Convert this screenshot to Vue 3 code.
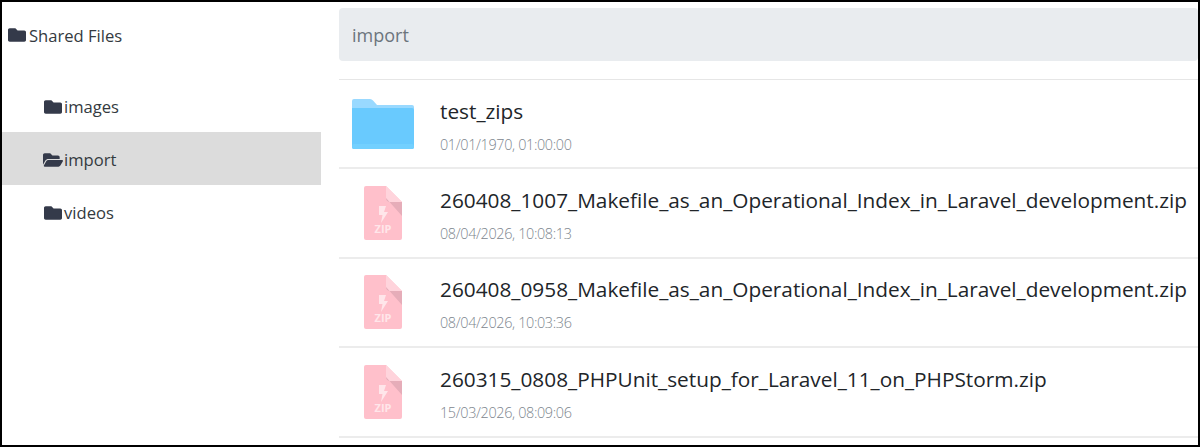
<script setup>
const subs = [
  { name: 'images', open: false },
  { name: 'import', open: true },
  { name: 'videos', open: false },
]
const files = [
  { name: '260408_1007_Makefile_as_an_Operational_Index_in_Laravel_development.zip', date: '08/04/2026, 10:08:13' },
  { name: '260408_0958_Makefile_as_an_Operational_Index_in_Laravel_development.zip', date: '08/04/2026, 10:03:36' },
  { name: '260315_0808_PHPUnit_setup_for_Laravel_11_on_PHPStorm.zip', date: '15/03/2026, 08:09:06' },
]
</script>

<template>
  <div class="frame">
    <aside class="side">
      <div class="root">
        <svg class="ico" viewBox="0 0 512 512"><path d="M464 128H272l-54.6-54.6c-6-6-14.1-9.4-22.6-9.4H48C21.5 64 0 85.500 0 112v288c0 26.500 21.500 48 48 48h416c26.500 0 48-21.500 48-48V176c0-26.500-21.500-48-48-48z"/></svg>
        <span>Shared Files</span>
      </div>
      <ul class="tree">
        <li v-for="s in subs" :key="s.name" class="node" :class="{ active: s.open }">
          <svg v-if="s.open" class="ico open" viewBox="0 0 576 512"><path d="M572.700 292.100l-72.400 124.100A64 64 0 0 1 445 448H45c-18.500 0-30.100-20.100-20.700-36.100l72.400-124.100A64 64 0 0 1 152 256h400c18.500 0 30.100 20.100 20.700 36.100zM152 224h328v-48c0-26.500-21.500-48-48-48H272l-64-64H48C21.500 64 0 85.500 0 112v278l69.100-118.400C86.200 242.300 118 224 152 224z"/></svg>
          <svg v-else class="ico" viewBox="0 0 512 512"><path d="M464 128H272l-54.6-54.6c-6-6-14.1-9.4-22.6-9.4H48C21.5 64 0 85.500 0 112v288c0 26.500 21.500 48 48 48h416c26.500 0 48-21.500 48-48V176c0-26.500-21.500-48-48-48z"/></svg>
          <span>{{ s.name }}</span>
        </li>
      </ul>
    </aside>
    <main class="main">
      <div class="path">import</div>
      <div class="list">
        <div class="row">
          <div class="thumb">
            <svg width="62" height="50" viewBox="0 0 62 50">
              <path d="M0 2a2 2 0 0 1 2-2h16a4 4 0 0 1 3 1.500L25 6h35a2 2 0 0 1 2 2v6H0z" fill="#99d9ff"/>
              <path d="M0 9h60a2 2 0 0 1 2 2v37a2 2 0 0 1-2 2H2a2 2 0 0 1-2-2z" fill="#69cafe"/>
              <rect x="0" y="45" width="62" height="5" rx="2" fill="#72d0ff"/>
            </svg>
          </div>
          <div class="info">
            <div class="name">test_zips</div>
            <div class="date">01/01/1970, 01:00:00</div>
          </div>
        </div>
        <div v-for="f in files" :key="f.name" class="row">
          <div class="thumb">
            <svg width="38" height="54" viewBox="0 0 38 54">
              <path d="M2 0h20l16 16v36a2 2 0 0 1-2 2H2a2 2 0 0 1-2-2V2a2 2 0 0 1 2-2z" fill="#ffc0cb"/>
              <path d="M22 0l16 16H26a4 4 0 0 1-4-4z" fill="#ffd4dc"/>
              <path d="M22 12a4 4 0 0 0 4 4h12v14z" fill="#e6adb9"/>
              <path d="M15 20h7l-2 6h4l-7 11 1.500-8H15z" fill="#ffe6ea"/>
              <text x="19" y="47" class="zip">ZIP</text>
            </svg>
          </div>
          <div class="info">
            <div class="name">{{ f.name }}</div>
            <div class="date">{{ f.date }}</div>
          </div>
        </div>
      </div>
    </main>
  </div>
</template>

<style>
html, body { margin: 0; background: #fff; }
</style>

<style scoped>
.frame {
  box-sizing: border-box;
  width: 1200px;
  height: 447px;
  border: 2px solid #000;
  display: flex;
  overflow: hidden;
  background: #fff;
  font-family: "Open Sans", sans-serif;
  font-size: 16.6px;
  color: #343a40;
}
.side { width: 319px; flex: none; }
.root {
  height: 22px;
  margin-top: 22px;
  padding-left: 6px;
  display: flex;
  align-items: center;
}
.ico { width: 18px; height: 18px; fill: #343a4a; flex: none; margin-right: 3px; }
.node .ico { margin-right: 2px; }
.node .ico.open { width: 20px; margin-right: 1px; margin-left: -1px; }
.tree { list-style: none; margin: 33px 0 0; padding: 0; }
.node {
  height: 53px;
  box-sizing: border-box;
  padding: 2px 0 0 42px;
  display: flex;
  align-items: center;
}
.node.active { background: #dcdcdc; }
.main { margin-left: 18px; flex: 1; min-width: 0; padding-top: 6px; }
.path {
  height: 53px;
  box-sizing: border-box;
  background: #e9ecef;
  border-radius: 4px;
  padding: 1px 24px 0 13px;
  color: #6c757d;
  font-size: 18px;
  line-height: 52px;
}
.list { margin-top: 18px; border-top: 1px solid #e6e6e6; }
.row {
  height: 89.400px;
  box-sizing: border-box;
  border-bottom: 2px solid #ececec;
  display: flex;
  align-items: center;
}
.thumb { width: 101px; flex: none; display: flex; justify-content: center; padding-right: 14px; box-sizing: border-box; }
.info { padding-top: 5px; }
.name { font-size: 20.8px; line-height: 27px; color: #212529; white-space: nowrap; margin-top: -1px; }
.date { font-size: 14.4px; font-weight: 300; letter-spacing: -0.35px; line-height: 19px; margin-top: 10px; color: #7d868e; }
.zip { font: 700 11px "Open Sans", sans-serif; fill: #ffe6ea; text-anchor: middle; }
</style>
